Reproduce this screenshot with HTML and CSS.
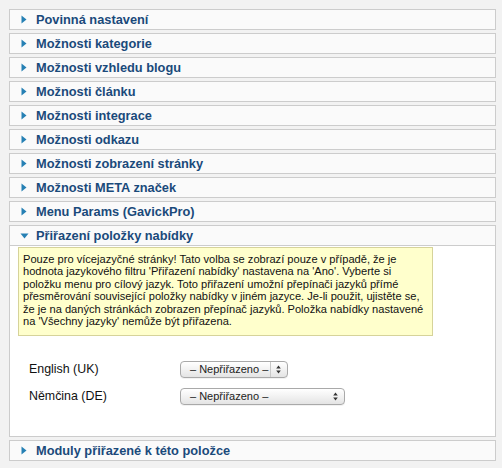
FILE: index.html
```html
<!DOCTYPE html>
<html lang="cs">
<head>
<meta charset="utf-8">
<title>Parametry položky</title>
<link rel="stylesheet" href="styles.css">
</head>
<body>
<div class="panels">
  <div class="panel"><div class="head"><svg class="arr" width="6" height="9" viewBox="0 0 6 9"><path d="M0.5 0.5 L5.5 4.5 L0.5 8.5 Z"/></svg><span>Povinná nastavení</span></div></div>
  <div class="panel"><div class="head"><svg class="arr" width="6" height="9" viewBox="0 0 6 9"><path d="M0.5 0.5 L5.5 4.5 L0.5 8.5 Z"/></svg><span>Možnosti kategorie</span></div></div>
  <div class="panel"><div class="head"><svg class="arr" width="6" height="9" viewBox="0 0 6 9"><path d="M0.5 0.5 L5.5 4.5 L0.5 8.5 Z"/></svg><span>Možnosti vzhledu blogu</span></div></div>
  <div class="panel"><div class="head"><svg class="arr" width="6" height="9" viewBox="0 0 6 9"><path d="M0.5 0.5 L5.5 4.5 L0.5 8.5 Z"/></svg><span>Možnosti článku</span></div></div>
  <div class="panel"><div class="head"><svg class="arr" width="6" height="9" viewBox="0 0 6 9"><path d="M0.5 0.5 L5.5 4.5 L0.5 8.5 Z"/></svg><span>Možnosti integrace</span></div></div>
  <div class="panel"><div class="head"><svg class="arr" width="6" height="9" viewBox="0 0 6 9"><path d="M0.5 0.5 L5.5 4.5 L0.5 8.5 Z"/></svg><span>Možnosti odkazu</span></div></div>
  <div class="panel"><div class="head"><svg class="arr" width="6" height="9" viewBox="0 0 6 9"><path d="M0.5 0.5 L5.5 4.5 L0.5 8.5 Z"/></svg><span>Možnosti zobrazení stránky</span></div></div>
  <div class="panel"><div class="head"><svg class="arr" width="6" height="9" viewBox="0 0 6 9"><path d="M0.5 0.5 L5.5 4.5 L0.5 8.5 Z"/></svg><span>Možnosti META značek</span></div></div>
  <div class="panel"><div class="head"><svg class="arr" width="6" height="9" viewBox="0 0 6 9"><path d="M0.5 0.5 L5.5 4.5 L0.5 8.5 Z"/></svg><span>Menu Params (GavickPro)</span></div></div>
  <div class="panel open">
    <div class="head"><svg class="arr down" width="9" height="6" viewBox="0 0 9 6"><path d="M0.5 0.5 L8.5 0.5 L4.5 5.5 Z"/></svg><span>Přiřazení položky nabídky</span></div>
    <div class="body">
      <div class="note">Pouze pro vícejazyčné stránky! Tato volba se zobrazí pouze v případě, že je hodnota jazykového filtru 'Přiřazení nabídky' nastavena na 'Ano'. Vyberte si položku menu pro cílový jazyk. Toto přiřazení umožní přepínači jazyků přímé přesměrování související položky nabídky v jiném jazyce. Je-li použit, ujistěte se, že je na daných stránkách zobrazen přepínač jazyků. Položka nabídky nastavené na 'Všechny jazyky' nemůže být přiřazena.</div>
      <div class="rows">
        <div class="row">
          <span class="lbl">English (UK)</span>
          <div class="sel short"><span class="val">– Nepřiřazeno –</span><span class="div"></span><svg class="ud" width="5" height="9" viewBox="0 0 5 9"><path d="M2.5 0.5 L4.8 3.5 L0.2 3.5 Z M2.5 8.5 L4.8 5.5 L0.2 5.5 Z"/></svg></div>
        </div>
        <div class="row">
          <span class="lbl">Němčina (DE)</span>
          <div class="sel long"><span class="val">– Nepřiřazeno –</span><svg class="ud" width="5" height="9" viewBox="0 0 5 9"><path d="M2.5 0.5 L4.8 3.5 L0.2 3.5 Z M2.5 8.5 L4.8 5.5 L0.2 5.5 Z"/></svg></div>
        </div>
      </div>
    </div>
  </div>
  <div class="panel"><div class="head"><svg class="arr" width="6" height="9" viewBox="0 0 6 9"><path d="M0.5 0.5 L5.5 4.5 L0.5 8.5 Z"/></svg><span>Moduly přiřazené k této položce</span></div></div>
</div>
</body>
</html>
```

FILE: styles.css
```css
html, body {
  margin: 0;
  padding: 0;
}
body {
  background: #f2f2f2;
  font-family: "Liberation Sans", Arial, sans-serif;
  padding: 9px 6px 0 9px;
}
.panels {
  display: flex;
  flex-direction: column;
  gap: 3px;
  width: 487px;
}
.panel {
  border: 1px solid #cccccc;
  background: #fafafa;
}
.head {
  height: 19px;
  display: flex;
  align-items: center;
  padding-left: 11px;
  font-size: 12.8px;
  font-weight: bold;
  color: #1a4a7b;
}
.arr {
  fill: #2680b4;
  margin-right: 9px;
  flex: none;
}
.arr.down {
  margin-left: -1px;
  margin-right: 7px;
}
.open .head {
  border-bottom: 1px solid #cccccc;
}
.open .body {
  background: #ffffff;
  padding: 1px 8px 32px 8px;
}
.note {
  box-sizing: border-box;
  width: 415px;
  height: 89px;
  background: #ffffcc;
  border: 1px solid #d6d39a;
  padding: 5px 4px 6px 4px;
  font-size: 11.1px;
  line-height: 12.4px;
  color: #111;
}
.rows {
  display: flex;
  flex-direction: column;
  gap: 11px;
  padding-top: 25px;
  padding-left: 11px;
}
.row {
  display: flex;
  align-items: center;
  height: 16px;
}
.lbl {
  width: 151px;
  font-size: 12.4px;
  color: #111;
}
.sel {
  box-sizing: border-box;
  height: 17px;
  border: 1px solid #a9a9a9;
  border-radius: 4px;
  background: linear-gradient(#ffffff, #f3f3f3 45%, #e4e4e4);
  display: flex;
  align-items: center;
  font-size: 11px;
  color: #222;
  padding-left: 9px;
  box-shadow: 0 1px 0 rgba(0,0,0,0.05);
}
.sel.short { width: 108px; }
.sel.long { width: 165px; }
.val { flex: 1; white-space: nowrap; }
.sel .div {
  width: 1px;
  align-self: stretch;
  background: #c8c8c8;
  margin-right: 5px;
}
.ud {
  fill: #333;
  margin-right: 6px;
  flex: none;
}
```
